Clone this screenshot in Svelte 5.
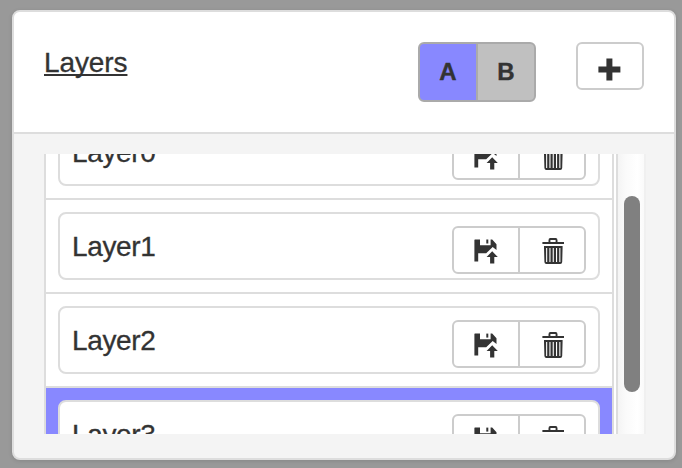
<script>
  const layers = ['Layer0', 'Layer1', 'Layer2', 'Layer3'];
  let selected = $state(3);
  let bank = $state('A');
</script>

<div class="screen">
  <section class="panel">
    <header>
      <h1>Layers</h1>
      <div class="banks">
        {#each ['A', 'B'] as name}
          <button class:active={bank === name} onclick={() => (bank = name)}>{name}</button>
        {/each}
      </div>
      <button class="add" aria-label="Add layer">
        <svg width="24" height="24" viewBox="0 0 24 24"><path d="M8.4 .5h6v8h8v6h-8v8h-6v-8h-8v-6h8z" /></svg>
      </button>
    </header>

    <div class="body">
      <div class="viewport">
        <ul>
          {#each layers as layer, i}
            <li class:selected={selected === i}>
              <div class="card">
                <span>{layer}</span>
                <div class="actions">
                  <button aria-label="Save">
                    <svg width="26" height="26" viewBox="0 0 26 26">
                      <path d="M2 1.4Q1.4 1.4 1.4 2V23.4H5.2V15.2H13.2L19.7 9L23.5 12V6.2L19.2 1.4H17.6V7.3H7V1.4Z" />
                      <path d="M13.3 1.6h2v4h-2z" />
                      <path d="M19.2 13.3L24.8 19H21.3V25.4H17.1V19H13.6Z" />
                    </svg>
                  </button>
                  <button aria-label="Delete">
                    <svg width="26" height="28" viewBox="0 0 26 28">
                      <path d="M9.5 5V3.2Q9.5 1 11.4 1H16.6Q18.5 1 18.5 3.2V5H25V7H3.4V5ZM11.4 5H16.6V3H11.4Z" fill-rule="evenodd" />
                      <path d="M5 9H23.6V10.6L23.2 25Q23.1 27 21.2 27H7.4Q5.5 27 5.4 25L5 10.6ZM7.1 11V25H8.2V11ZM10.4 11V25H11.5V11ZM13.7 11V25H14.8V11ZM17 11V25H18.1V11ZM20.3 11V25H21.4V11Z" fill-rule="evenodd" />
                    </svg>
                  </button>
                </div>
              </div>
            </li>
          {/each}
        </ul>
        <div class="track"><div class="thumb"></div></div>
      </div>
    </div>
  </section>
</div>

<style>
  .screen {
    box-sizing: border-box;
    width: 682px;
    height: 468px;
    padding: 10px 6px 8px 12px;
    overflow: hidden;
    background: #999;
    color: #333;
    font-family: "Liberation Sans", Arial, sans-serif;
  }
  .panel {
    box-sizing: border-box;
    display: flex;
    flex-direction: column;
    height: 450px;
    border: 2px solid #ddd;
    border-radius: 8px;
    background: #f4f4f4;
    overflow: hidden;
    box-shadow: 0 1px 4px rgba(0, 0, 0, 0.12);
  }
  header {
    box-sizing: border-box;
    display: flex;
    align-items: flex-start;
    height: 122px;
    padding: 30px 30px 0;
    border-bottom: 2px solid #ddd;
    background: #fff;
  }
  h1 {
    margin: 5px auto 0 0;
    font-size: 28px;
    line-height: 32px;
    font-weight: 400;
    letter-spacing: -0.1px;
    -webkit-text-stroke: 0.3px #333;
    text-decoration: underline;
    text-decoration-thickness: 2px;
    text-underline-offset: 2px;
    text-decoration-skip-ink: none;
  }
  button {
    box-sizing: border-box;
    display: flex;
    align-items: center;
    justify-content: center;
    margin: 0;
    padding: 0;
    border: 2px solid #ccc;
    background: #fff;
    color: #333;
    font: bold 24px "Liberation Sans", Arial, sans-serif;
  }
  svg {
    display: block;
    fill: #333;
  }
  .banks {
    display: flex;
    margin-right: 40px;
  }
  .banks button {
    width: 60px;
    height: 60px;
    padding-bottom: 1px;
    border-color: #aaa;
    background: #c0c0c0;
    -webkit-text-stroke: 0.4px #333;
  }
  .banks button.active {
    background: #8888ff;
  }
  .banks button:first-child,
  .actions button:first-child {
    border-radius: 6px 0 0 6px;
  }
  .banks button:last-child,
  .actions button:last-child {
    border-radius: 0 6px 6px 0;
    margin-left: -2px;
  }
  .add {
    width: 68px;
    height: 48px;
    border-radius: 6px;
    padding-top: 7px;
  }
  .body {
    padding: 20px 28px 24px 30px;
  }
  .viewport {
    display: flex;
    height: 280px;
    overflow: hidden;
    background: #fff;
  }
  ul {
    box-sizing: border-box;
    flex: none;
    width: 570px;
    margin: -50px 0 0;
    padding: 0;
    list-style: none;
  }
  li {
    box-sizing: border-box;
    height: 96px;
    margin-bottom: -2px;
    padding: 12px;
    border: 2px solid #ddd;
    background: #fff;
  }
  li.selected {
    background: #8888ff;
  }
  .card {
    box-sizing: border-box;
    display: flex;
    justify-content: space-between;
    height: 68px;
    padding: 12px 12px 0;
    border: 2px solid #ddd;
    border-radius: 8px;
    background: #fff;
  }
  .card span {
    margin-top: 5px;
    font-size: 28px;
    line-height: 32px;
    letter-spacing: -0.35px;
    -webkit-text-stroke: 0.3px #333;
  }
  .actions {
    display: flex;
  }
  .actions button {
    width: 68px;
    height: 48px;
    padding-top: 2px;
  }
  .track {
    box-sizing: border-box;
    flex: 1;
    margin-left: 2px;
    padding: 42px 0 0 6px;
    border-left: 2px solid #ddd;
    border-right: 2px solid #f0f0f0;
    background: linear-gradient(90deg, #f4f4f4, #fafafa 30%, #fff 75%, #fafafa);
  }
  .thumb {
    width: 16px;
    height: 196px;
    border-radius: 8px;
    background: #808080;
  }
</style>
